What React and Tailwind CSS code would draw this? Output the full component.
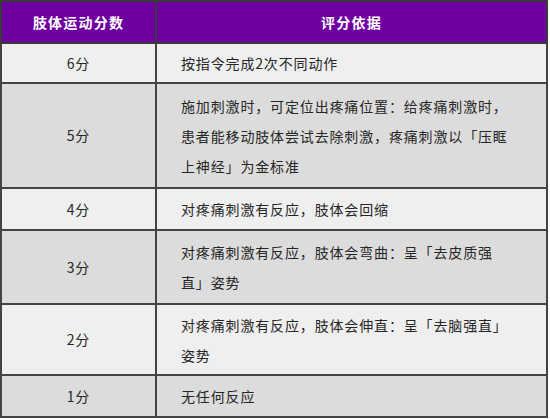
const rows = [
  { score: '6分', lines: ['按指令完成2次不同动作'], h: 'h-[40px]', bg: 'bg-[#efefef]' },
  {
    score: '5分',
    lines: [
      '施加刺激时，可定位出疼痛位置：给疼痛刺激时，',
      '患者能移动肢体尝试去除刺激，疼痛刺激以「压眶',
      '上神经」为金标准',
    ],
    h: 'h-[105px]',
    bg: 'bg-[#dcdcdc]',
  },
  { score: '4分', lines: ['对疼痛刺激有反应，肢体会回缩'], h: 'h-[42px]', bg: 'bg-[#efefef]' },
  {
    score: '3分',
    lines: ['对疼痛刺激有反应，肢体会弯曲：呈「去皮质强', '直」姿势'],
    h: 'h-[74px]',
    bg: 'bg-[#dcdcdc]',
  },
  {
    score: '2分',
    lines: ['对疼痛刺激有反应，肢体会伸直：呈「去脑强直」', '姿势'],
    h: 'h-[71px]',
    bg: 'bg-[#efefef]',
  },
  { score: '1分', lines: ['无任何反应'], h: 'h-[42px]', bg: 'bg-[#dcdcdc]' },
];

export default function App() {
  return (
    <div className="w-[550px] h-[419px] bg-white overflow-hidden font-['Noto_Sans_CJK_SC','Noto_Sans',sans-serif] text-[#262626]">
      <table className="w-[548px] border-collapse table-fixed text-[14px] tracking-[0.85px]">
        <colgroup>
          <col className="w-[155px]" />
          <col />
        </colgroup>
        <thead>
          <tr className="h-[42px] bg-[#6e00a0] text-white font-bold">
            <th className="border-2 border-[#3a3a3a] text-center tracking-[1.2px]">肢体运动分数</th>
            <th className="border-2 border-[#3a3a3a] text-center tracking-[1.2px]">评分依据</th>
          </tr>
        </thead>
        <tbody>
          {rows.map((r, i) => (
            <tr key={i} className={`${r.h} ${r.bg}`}>
              <td className="border-2 border-[#444] text-center align-middle">{r.score}</td>
              <td className="border-2 border-[#444] pl-[24px] align-middle">
                <div className="leading-[30px] whitespace-nowrap">
                  {r.lines.map((l, j) => (
                    <div key={j}>{l}</div>
                  ))}
                </div>
              </td>
            </tr>
          ))}
        </tbody>
      </table>
    </div>
  );
}
